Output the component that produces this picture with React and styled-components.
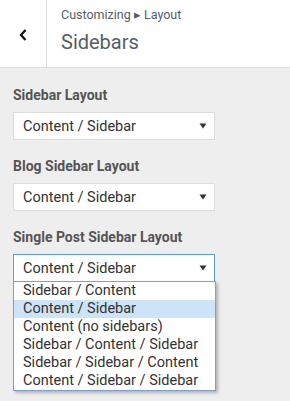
import React from "react";
import styled, { createGlobalStyle } from "styled-components";

const GlobalStyle = createGlobalStyle`
  html, body {
    margin: 0;
    padding: 0;
    background: #eeeeee;
  }
  body {
    font-family: Roboto, "Liberation Sans", sans-serif;
    width: 290px;
    height: 401px;
    overflow: hidden;
  }
`;

const Header = styled.div`
  display: flex;
  height: 67px;
  background: #fff;
  border-bottom: 1px solid #dddddd;
`;

const BackButton = styled.div`
  width: 47px;
  display: flex;
  align-items: center;
  justify-content: center;
  border-right: 1px solid #dddddd;
  padding-top: 2px;
  box-sizing: border-box;
`;

const Title = styled.div`
  display: flex;
  flex-direction: column;
  padding-left: 14px;
  padding-top: 7px;
  color: #555d66;
`;

const Crumb = styled.span`
  font-size: 12.5px;
  line-height: 16px;
`;

const Heading = styled.span`
  font-size: 20px;
  line-height: 26px;
  margin-top: 6px;
`;

const Body = styled.div`
  padding: 17px 13px 0 13px;
`;

const Section = styled.div`
  position: relative;
  margin-bottom: 16px;
`;

const Label = styled.div`
  font-size: 14px;
  font-weight: 700;
  line-height: 20px;
  color: #555555;
  margin-bottom: 7px;
`;

const SelectBox = styled.div`
  width: 202px;
  height: 28px;
  box-sizing: border-box;
  background: #fff;
  border: 1px solid ${(p) => (p.open ? "#5b9dd9" : "#dddddd")};
  display: flex;
  align-items: center;
  justify-content: space-between;
  padding: 0 7px 0 9px;
  font-size: 14.5px;
  color: #333;
`;

const List = styled.div`
  position: absolute;
  left: 0;
  top: calc(100% - 1px);
  width: 203px;
  box-sizing: border-box;
  background: #fff;
  border: 1px solid #7f9ed3;
  box-shadow: 2px 2px 3px rgba(0, 0, 0, 0.25);
  z-index: 2;
`;

const Item = styled.div`
  height: 18px;
  line-height: 18px;
  padding-left: 9px;
  font-size: 14.5px;
  color: #333;
  background: ${(p) => (p.active ? "#cde3f7" : "transparent")};
`;

const Arrow = () => (
  <svg width="8" height="6" viewBox="0 0 8 6">
    <polygon points="0.5,0.5 7.5,0.5 4,5.5" fill="#333" />
  </svg>
);

const Chevron = () => (
  <svg width="10" height="14" viewBox="0 0 10 14">
    <polyline
      points="7.5,2 3,7 7.5,12"
      fill="none"
      stroke="#111"
      strokeWidth="2.3"
    />
  </svg>
);

const options = [
  "Sidebar / Content",
  "Content / Sidebar",
  "Content (no sidebars)",
  "Sidebar / Content / Sidebar",
  "Sidebar / Sidebar / Content",
  "Content / Sidebar / Sidebar",
];

const Select = ({ open }) => (
  <>
    <SelectBox open={open}>
      <span>Content / Sidebar</span>
      <Arrow />
    </SelectBox>
    {open && (
      <List>
        {options.map((o) => (
          <Item key={o} active={o === "Content / Sidebar"}>
            {o}
          </Item>
        ))}
      </List>
    )}
  </>
);

export default function App() {
  return (
    <>
      <GlobalStyle />
      <Header>
        <BackButton>
          <Chevron />
        </BackButton>
        <Title>
          <Crumb>Customizing ▸ Layout</Crumb>
          <Heading>Sidebars</Heading>
        </Title>
      </Header>
      <Body>
        <Section>
          <Label>Sidebar Layout</Label>
          <Select />
        </Section>
        <Section>
          <Label>Blog Sidebar Layout</Label>
          <Select />
        </Section>
        <Section>
          <Label>Single Post Sidebar Layout</Label>
          <Select open />
        </Section>
      </Body>
    </>
  );
}
